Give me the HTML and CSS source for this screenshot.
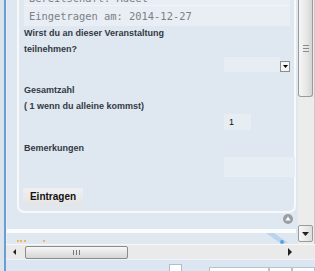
FILE: index.html
```html
<!DOCTYPE html>
<html lang="de">
<head>
    <meta charset="UTF-8">
    <title>Veranstaltung - Anmeldung</title>
    <link rel="stylesheet" href="styles.css">
</head>
<body>
    <div class="window">
        <div class="frame">
            <div class="view">
                <!-- scrolled page content -->
                <div class="page">
                    <div class="card">
                        <div class="info">
                            <div class="info-row info-first">Bereitschaft: Adeel</div>
                            <div class="info-row">Eingetragen am: 2014-12-27</div>
                        </div>
                        <form class="form">
                            <div class="field">
                                <label class="label" for="teilnahme">Wirst du an dieser Veranstaltung<br>teilnehmen?</label>
                                <div class="select">
                                    <select id="teilnahme" class="select-value"></select>
                                    <span class="select-arrow"><svg width="5" height="3" viewBox="0 0 5 3"><path d="M0 0h5L2.5 3z" fill="#000"/></svg></span>
                                </div>
                            </div>
                            <div class="field">
                                <label class="label" for="anzahl">Gesamtzahl<br>( 1 wenn du alleine kommst)</label>
                                <input id="anzahl" class="input input-num" type="text" value="1">
                            </div>
                            <div class="field">
                                <label class="label" for="bemerkung">Bemerkungen</label>
                                <textarea id="bemerkung" class="input input-text"></textarea>
                            </div>
                            <button type="button" class="btn">Eintragen</button>
                        </form>
                    </div>
                    <div class="totop-row">
                        <span class="totop"><svg width="10" height="10" viewBox="0 0 10 10"><circle cx="5" cy="5" r="5" fill="#9a9ea3"/><path d="M5 2.4L7.6 6.6H2.4z" fill="#fff"/></svg></span>
                    </div>
                    <div class="band"></div>
                    <div class="peek">
                        <svg width="280" height="11" viewBox="0 0 280 11">
                            <rect x="0" y="7" width="2" height="2" fill="#f0b45a"/>
                            <rect x="3" y="7" width="2" height="2" fill="#f0b45a"/>
                            <rect x="7" y="7" width="2" height="2" fill="#f0b45a"/>
                            <rect x="26" y="7" width="2" height="2" fill="#f0b45a"/>
                            <path d="M250 0h8l14 10h-8z" fill="#b9d4ec"/>
                            <circle cx="266" cy="9" r="2" fill="#5aa2dc"/>
                        </svg>
                    </div>
                </div>
                <!-- vertical scrollbar -->
                <div class="vbar">
                    <div class="vthumb"><span class="grip"></span></div>
                    <div class="vbtn"><svg width="7" height="4" viewBox="0 0 7 4"><path d="M0 0h7L3.5 4z" fill="#222"/></svg></div>
                </div>
            </div>
            <!-- horizontal scrollbar -->
            <div class="hbar">
                <span class="arrow-left"></span>
                <div class="hthumb"><span class="hgrip"></span></div>
                <span class="arrow-right"></span>
            </div>
            <div class="status">
                <span class="status-box"></span>
                <span class="status-cell"></span>
                <span class="status-cell status-small"></span>
                <span class="status-cell status-last"></span>
            </div>
        </div>
    </div>
</body>
</html>
```

FILE: styles.css
```css
body {
    margin: 0;
    background-color: #dfe8f0;
    font-family: "Liberation Sans", Arial, sans-serif;
}
.window {
    width: 315px;
    height: 271px;
    overflow: hidden;
    border-left: 4px solid #dae4ed;
    box-sizing: border-box;
}
.frame {
    height: 100%;
    border-left: 2px solid #6d9cd0;
    display: flex;
    flex-direction: column;
}
.view {
    display: flex;
    height: 244px;
}
.page {
    flex: 1;
    overflow: hidden;
    padding: 0 2px 0 10px;
    border-left: 1px solid #e9eff5;
}
.card {
    margin-top: -18px;
    border: 2px solid #f7f9fb;
    border-radius: 7px;
    padding: 5px 4px 5px 5px;
}
.info {
    background-color: #e8eef3;
}
.info-row {
    font-family: "DejaVu Sans Mono", monospace;
    font-size: 10.4px;
    line-height: 14px;
    color: #7a8088;
    padding: 3px 5px;
    white-space: nowrap;
}
.info-first {
    padding: 2px 5px 0;
    border-bottom: 1px solid #f1f5f8;
}
.form {
    margin: 0;
}
.field {
    margin-bottom: 11px;
}
.label {
    display: block;
    font-size: 9px;
    font-weight: bold;
    line-height: 15.5px;
    color: #343944;
}
.select {
    display: flex;
    align-items: flex-end;
    margin-left: 200px;
    height: 15px;
}
.select-value {
    appearance: none;
    width: 63px;
    height: 15px;
    border: none;
    border-radius: 0;
    padding: 0;
    background-color: #e7eef3;
}
.select-arrow {
    display: flex;
    align-items: center;
    justify-content: center;
    width: 9px;
    height: 9px;
    background-color: #f4f4f4;
    border: 1px solid #8d8d8d;
}
.input {
    display: block;
    margin: 0 0 0 200px;
    border: none;
    border-radius: 0;
    padding: 0 0 0 5px;
    box-sizing: border-box;
    background-color: #e7eef3;
    font-family: "Liberation Sans", Arial, sans-serif;
    font-size: 9px;
    color: #111;
    outline: none;
}
.input-num {
    width: 27px;
    height: 16px;
}
.input-text {
    width: 71px;
    height: 20px;
    resize: none;
}
.btn {
    display: block;
    width: 60px;
    height: 18px;
    margin-left: -1px;
    padding: 0;
    border: none;
    border-radius: 0;
    background: linear-gradient(#f0f0f0, #e4e4e4);
    font-family: "Liberation Sans", Arial, sans-serif;
    font-size: 10px;
    font-weight: bold;
    color: #111;
}
.totop-row {
    display: flex;
    justify-content: flex-end;
    height: 16px;
    padding-right: 3px;
}
.totop {
    display: flex;
    margin-top: 1px;
}
.band {
    height: 4px;
    background-color: #fafcfd;
    margin-left: -10px;
}
.peek {
    height: 11px;
    display: flex;
}
.vbar {
    width: 17px;
    background-color: #ececec;
    border-right: 1px solid #c9c9c9;
    box-sizing: border-box;
    display: flex;
    flex-direction: column;
    justify-content: space-between;
    padding-bottom: 2px;
}
.vthumb {
    width: 15px;
    height: 97px;
    box-sizing: border-box;
    border: 1px solid #9a9a9a;
    border-top: none;
    border-radius: 0 0 3px 3px;
    background: linear-gradient(to right, #f6f6f6, #e6e6e6 60%, #d4d4d4);
    display: flex;
    align-items: center;
    justify-content: center;
}
.grip {
    width: 6px;
    height: 5px;
    border-top: 1px solid #8a8a8a;
    border-bottom: 1px solid #8a8a8a;
    background: linear-gradient(transparent 2px, #8a8a8a 2px, #8a8a8a 3px, transparent 3px);
}
.vbtn {
    width: 15px;
    height: 17px;
    box-sizing: border-box;
    border: 1px solid #9a9a9a;
    border-radius: 2px;
    background: linear-gradient(to right, #f8f8f8, #dedede);
    display: flex;
    align-items: center;
    justify-content: center;
}
.hbar {
    height: 15px;
    display: flex;
    align-items: center;
    background-color: #eaeaea;
    border-top: 1px solid #f8f8f8;
    box-sizing: border-box;
    padding-left: 7px;
}
.arrow-left {
    width: 0;
    height: 0;
    border-top: 3px solid transparent;
    border-bottom: 3px solid transparent;
    border-right: 3px solid #222;
}
.hthumb {
    width: 103px;
    height: 13px;
    margin-left: 9px;
    box-sizing: border-box;
    border: 1px solid #8c8c8c;
    border-radius: 2px;
    background: linear-gradient(#f7f7f7, #e4e4e4 55%, #d6d6d6);
    display: flex;
    align-items: center;
    justify-content: center;
}
.hgrip {
    width: 5px;
    height: 5px;
    border-left: 1px solid #777;
    border-right: 1px solid #777;
    background: linear-gradient(to right, transparent 2px, #777 2px, #777 3px, transparent 3px);
}
.arrow-right {
    width: 0;
    height: 0;
    margin-left: auto;
    margin-right: 23px;
    border-top: 4px solid transparent;
    border-bottom: 4px solid transparent;
    border-left: 4px solid #222;
}
.status {
    height: 12px;
    display: flex;
    align-items: flex-end;
    background-color: #dbe6f2;
    border-top: 1px solid #eef3f8;
    box-sizing: border-box;
}
.status-box {
    width: 13px;
    height: 7px;
    margin-left: 163px;
    box-sizing: border-box;
    border: 1px solid #b4bcc6;
    border-bottom: none;
    background-color: #ffffff;
}
.status-cell {
    width: 60px;
    height: 4px;
    margin-left: 27px;
    box-sizing: border-box;
    border: 1px solid #b8c2cc;
    border-bottom: none;
    background-color: #ffffff;
}
.status-small {
    width: 23px;
    margin-left: 0;
}
.status-last {
    flex: 1;
    margin-left: 0;
}
```
